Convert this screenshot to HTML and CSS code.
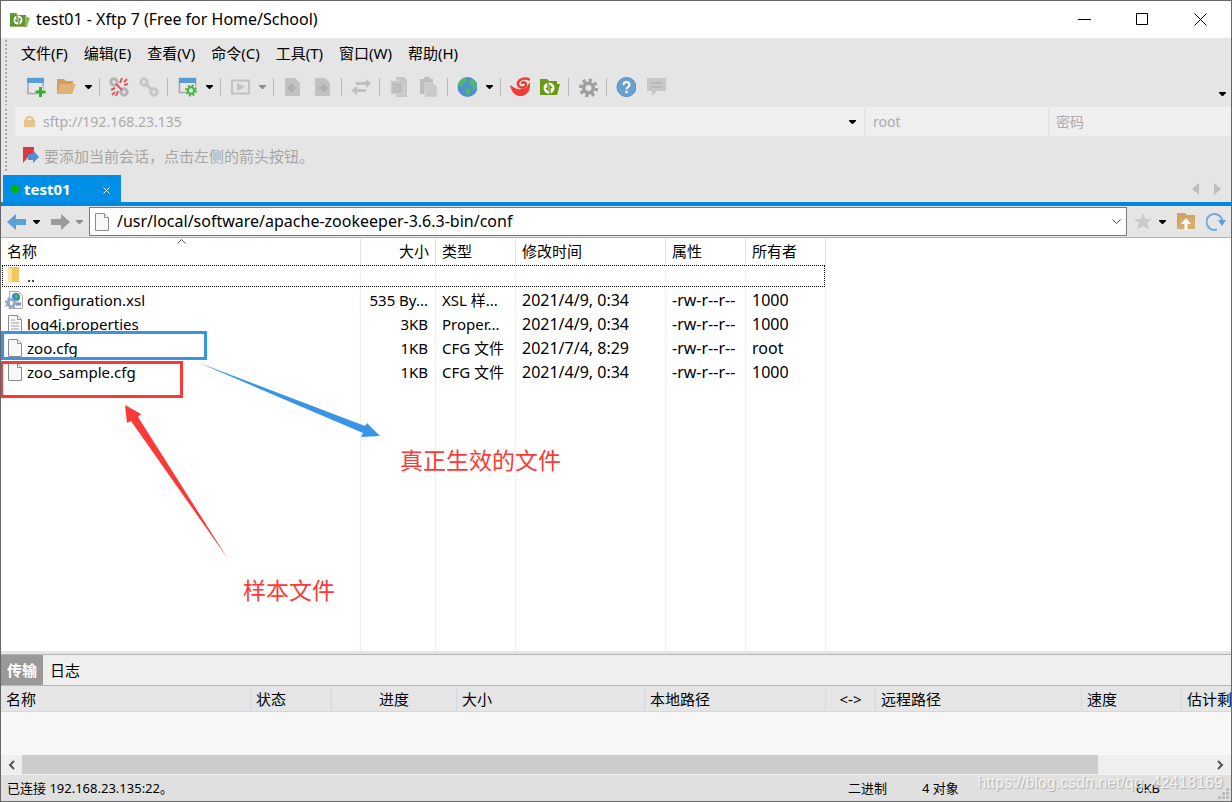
FILE: index.html
```html
<!DOCTYPE html>
<html lang="zh-CN">
<head>
<meta charset="utf-8">
<title>test01 - Xftp 7</title>
<link rel="stylesheet" href="styles.css">
</head>
<body>
<svg class="defs" aria-hidden="true">
  <symbol id="caret" viewBox="0 0 7 4"><path d="M0 0h7v1L4 4H3L0 1z" fill="currentColor"/></symbol>
  <symbol id="page" viewBox="0 0 16 20"><path d="M1.500 1.500h9l4 4v13h-13z" fill="#f8f8f8" stroke="#8c8c8c"/><path d="M10.500 1.500v4h4" fill="#fff" stroke="#8c8c8c"/></symbol>
  <symbol id="sheet" viewBox="0 0 20 20"><path d="M2 1h10l5 5v13H2z" fill="#c2c2c2"/></symbol>
</svg>
<div class="window">
  <header class="titlebar">
    <svg class="app-icon" width="20" height="16" viewBox="0 0 20 16"><path d="M0 1h6l2 2h8v11H0z" fill="#6f9f2e"/><path d="M0 4h15l5 2-3 9H0z" fill="#8eb95e"/><path d="M0 3h15v11H0z" fill="#5f932c"/><circle cx="8" cy="8" r="4.500" fill="#fff"/><path d="M7 3.500v6L5 8M9 12.500v-6L11 8" stroke="#5f932c" stroke-width="1.300" fill="none"/></svg>
    <h1 class="title">test01 - Xftp 7 (Free for Home/School)</h1>
    <div class="window-buttons">
      <button class="win-btn" aria-label="最小化"><svg width="13" height="13"><path d="M0 6.500h13" stroke="#000"/></svg></button>
      <button class="win-btn" aria-label="最大化"><svg width="13" height="13"><path d="M.5.5h11v11H.5z" stroke="#000" fill="none"/></svg></button>
      <button class="win-btn" aria-label="关闭"><svg width="13" height="13"><path d="M.5.5l12 12M12.500.5l-12 12" stroke="#000"/></svg></button>
    </div>
  </header>

  <div class="docked">
    <nav class="menubar">
      <button>文件(F)</button><button>编辑(E)</button><button>查看(V)</button><button>命令(C)</button><button>工具(T)</button><button>窗口(W)</button><button>帮助(H)</button>
    </nav>
    <div class="toolbar">
      <button class="tool" aria-label="新建"><svg viewBox="0 0 20 20"><path d="M2 1.500h15v15H2z" fill="#e8e8e8" stroke="#a4a4a4" stroke-width="1.500"/><path d="M1 1h17v5H1z" fill="#5a9bd4"/><path d="M14.500 9.500v10M9.500 14.500h10" stroke="#e5e5e5" stroke-width="5"/><path d="M14.500 10v10M9.500 15h10" stroke="#2fb02f" stroke-width="3"/></svg></button>
      <button class="tool" aria-label="打开"><svg viewBox="0 0 20 20"><path d="M1 2h7l2 2h7v12H1z" fill="#d49e5c"/><path d="M4 7h16l-4 10H1z" fill="#e0b277"/></svg></button>
      <button class="drop" aria-label="打开列表"><svg><use href="#caret"/></svg></button>
      <span class="sep"></span>
      <button class="tool" aria-label="断开"><svg viewBox="0 0 20 20"><g fill="none" stroke="#b4b4b4" stroke-width="3"><circle cx="5" cy="5" r="3.200"/><circle cx="15" cy="15" r="3.200"/></g><path d="M13 1l-2 5M18 2l-3 3M19 7l-4 1M2 13l4-2M3 18l3-3M7 19l2-5M7 7l6 6" stroke="#e8555c" stroke-width="2"/></svg></button>
      <button class="tool" aria-label="重新连接"><svg viewBox="0 0 20 20"><g fill="none" stroke="#c6c6c6" stroke-width="3"><circle cx="5" cy="5" r="3.200"/><circle cx="15" cy="15" r="3.200"/><path d="M7 7l6 6"/></g></svg></button>
      <span class="sep"></span>
      <button class="tool" aria-label="属性"><svg viewBox="0 0 20 20"><path d="M2.500 1.500h16v14h-16z" fill="#e8e8e8" stroke="#a4a4a4" stroke-width="1.500"/><path d="M2 1h17v5H2z" fill="#5a9bd4"/><circle cx="14" cy="13.500" r="6.500" fill="#e5e5e5"/><circle cx="14" cy="13.500" r="3.200" fill="none" stroke="#43b33c" stroke-width="2"/><circle cx="14" cy="13.500" r="5" fill="none" stroke="#43b33c" stroke-width="2" stroke-dasharray="2 1.930"/></svg></button>
      <button class="drop" aria-label="属性列表"><svg><use href="#caret"/></svg></button>
      <span class="sep"></span>
      <button class="tool" aria-label="运行" disabled><svg viewBox="0 0 20 20"><path d="M2 3.500h17v13H2z" fill="none" stroke="#c2c2c2" stroke-width="2"/><path d="M7 6l8 4-8 4z" fill="#c2c2c2"/></svg></button>
      <button class="drop off" aria-label="运行列表" disabled><svg><use href="#caret"/></svg></button>
      <span class="sep"></span>
      <button class="tool" aria-label="下载" disabled><svg viewBox="0 0 20 20"><use href="#sheet"/><path d="M13 11H8M9 8l-4 3 4 3z" stroke="#b0b0b0" stroke-width="2" fill="#b0b0b0"/></svg></button>
      <button class="tool" aria-label="上传" disabled><svg viewBox="0 0 20 20"><use href="#sheet"/><path d="M5 11h5M10 8l4 3-4 3z" stroke="#b0b0b0" stroke-width="2" fill="#b0b0b0"/></svg></button>
      <span class="sep"></span>
      <button class="tool" aria-label="同步" disabled><svg viewBox="0 0 20 20"><path d="M5 5h10V2l5 4.500-5 4.500V8H5zM15 12H6V9l-6 4.500L6 18v-3h9z" fill="#c0c0c0"/></svg></button>
      <span class="sep"></span>
      <button class="tool" aria-label="复制" disabled><svg viewBox="0 0 20 20"><path d="M7 0h8l3 3v17H7z" fill="#c6c6c6"/><path d="M2 4h10l3 3v10H2z" fill="#c2c2c2" stroke="#d6d6d6"/><path d="M4 8h8M4 11h8M4 14h8" stroke="#b2b2b2"/></svg></button>
      <button class="tool" aria-label="粘贴" disabled><svg viewBox="0 0 20 20"><path d="M1 2h4V0h6v2h3v15H1z" fill="#bebebe"/><path d="M6 6h8l4 4v10H6z" fill="#c9c9c9" stroke="#d8d8d8"/></svg></button>
      <span class="sep"></span>
      <button class="tool" aria-label="语言"><svg viewBox="0 0 20 20"><circle cx="10.500" cy="10" r="10" fill="#4f8fd0"/><path d="M2 5l3-3 4-1 1 2-1 3-3 1-1 3-4-1zM13 2l4 1 3 6-2 4-2-1-1-4-3-1zM9 11l5 1-1 4-3 3-2-4z" fill="#4cba68"/></svg></button>
      <button class="drop" aria-label="语言列表"><svg><use href="#caret"/></svg></button>
      <span class="sep"></span>
      <button class="tool" aria-label="Xshell"><svg viewBox="0 0 20 20"><path d="M0 8c4 2 6 5 11 4l5-1 4-6c1 8-3 14-10 14C4 19 1 13 0 8z" fill="#ef3d33"/><path d="M20 3c-5-3-11-1-12 3-1 5 7 6 8 2 0-3-4-4-4-1" fill="none" stroke="#ef3d33" stroke-width="2.500"/></svg></button>
      <button class="tool" aria-label="Xftp"><svg viewBox="0 0 20 20"><path d="M0 2h7l2 2h8v3h3l-3 11H0z" fill="#6a9a13"/><circle cx="9" cy="11" r="5.500" fill="#fff"/><path d="M8 5v8l-2-2M10 17V9l2 2" stroke="#6a9a13" stroke-width="1.500" fill="none"/></svg></button>
      <span class="sep"></span>
      <button class="tool" aria-label="选项"><svg viewBox="0 0 20 20"><circle cx="10.500" cy="11" r="4.800" fill="none" stroke="#9e9e9e" stroke-width="3.500"/><circle cx="10.500" cy="11" r="7.800" fill="none" stroke="#9e9e9e" stroke-width="3.500" stroke-dasharray="3.060 3.060"/></svg></button>
      <span class="sep"></span>
      <button class="tool" aria-label="帮助"><svg viewBox="0 0 20 20"><circle cx="10.500" cy="10" r="9.500" fill="#6a9fd4" stroke="#5588c4"/><path d="M7.500 8c0-4 6-4 6 0 0 2-3 2-3 4.500" stroke="#fff" stroke-width="2" fill="none"/><circle cx="10.500" cy="15" r="1.300" fill="#fff"/></svg></button>
      <button class="tool" aria-label="反馈"><svg viewBox="0 0 20 20"><path d="M1 1h19v13h-9l-5 5v-5H1z" fill="#c8c8c8"/><path d="M5 6h11M5 10h11" stroke="#b4b4b4" stroke-width="1.500"/></svg></button>
      <button class="drop more" aria-label="更多"><svg><use href="#caret"/></svg></button>
    </div>
  </div>

  <div class="docked">
    <form class="address">
      <label class="host"><svg width="11" height="12"><path d="M2.500 5V3q0-2 3-2t3 2v2" fill="none" stroke="#e8c38c" stroke-width="2"/><path d="M0 4h11v7H0z" fill="#e8c38c"/></svg><input type="text" aria-label="主机" value="sftp://192.168.23.135"><button type="button" class="drop" aria-label="主机列表"><svg><use href="#caret"/></svg></button></label>
      <input class="user" type="text" aria-label="用户名" value="root">
      <input class="pass" type="password" aria-label="密码" placeholder="密码">
    </form>
    <div class="hint">
      <button class="flag" aria-label="添加会话"><svg width="16" height="17"><path d="M0 0h11v11L5 10l-5 6z" fill="#e0383e"/><path d="M5 7h5V3l6 7-6 6v-3H5z" fill="#568fd0"/></svg></button>
      <span>要添加当前会话，点击左侧的箭头按钮。</span>
    </div>
  </div>

  <div class="tabs">
    <div class="tab"><i class="dot"></i><button class="tab-name">test01</button><button class="tab-close" aria-label="关闭标签"><svg width="7" height="7"><path d="M.5.5l6 6M6.500.5l-6 6" stroke="#fff"/></svg></button></div>
    <button class="scroller" aria-label="上一个"><svg width="7" height="12"><path d="M7 0v12L0 6z" fill="#bebebe"/></svg></button>
    <button class="scroller" aria-label="下一个"><svg width="7" height="12"><path d="M0 0v12l7-6z" fill="#bebebe"/></svg></button>
  </div>

  <div class="pathbar">
    <button class="nav" aria-label="后退"><svg width="20" height="16"><path d="M0 8l9-8v5h10v6H9v5z" fill="#5b9fd8"/></svg></button>
    <button class="drop" aria-label="后退列表"><svg><use href="#caret"/></svg></button>
    <button class="nav forward" aria-label="前进"><svg width="20" height="16"><path d="M20 8l-9-8v5H1v6h10v5z" fill="#9b9b9b"/></svg></button>
    <button class="drop off" aria-label="前进列表"><svg><use href="#caret"/></svg></button>
    <label class="path"><svg width="16" height="20"><use href="#page"/></svg><input type="text" aria-label="路径" value="/usr/local/software/apache-zookeeper-3.6.3-bin/conf"><button class="chev" type="button" aria-label="路径列表"><svg width="9" height="6"><path d="M.5.5l4 4 4-4" fill="none" stroke="#444"/></svg></button></label>
    <button class="nav" aria-label="收藏"><svg width="18" height="17" viewBox="0 0 18 17"><path d="M9 0l2.500 6H18l-5 4 2 6.500L9 13l-6 3.500L5 10 0 6h6.500z" fill="#cacaca"/></svg></button>
    <button class="drop" aria-label="收藏列表"><svg><use href="#caret"/></svg></button>
    <button class="nav up" aria-label="上级目录"><svg width="18" height="17"><path d="M0 0h8l2 2h8v14H0z" fill="#d6a161"/><path d="M3 5h15v11H0z" fill="#d9ab70"/><path d="M9 17v-7" stroke="#fff" stroke-width="3"/><path d="M9 5l5 6H4z" fill="#fff"/></svg></button>
    <button class="nav" aria-label="刷新"><svg width="20" height="18"><path d="M11 16.500A8 8 0 1 1 16.500 9" fill="none" stroke="#72aade" stroke-width="2"/><path d="M12 7h8l-4 6z" fill="#5b9fd8"/></svg></button>
  </div>

  <main class="files">
    <table class="file-table">
      <colgroup><col class="c-name"><col class="c-size"><col class="c-type"><col class="c-date"><col class="c-attr"><col class="c-owner"></colgroup>
      <thead><tr><th class="sorted">名称<svg width="9" height="5"><path d="M.5 4.500l4-4 4 4" fill="none" stroke="#555"/></svg></th><th class="num">大小</th><th>类型</th><th>修改时间</th><th>属性</th><th>所有者</th></tr></thead>
      <tbody>
        <tr class="focus"><td><span class="file"><svg width="18" height="20"><path d="M1 1h11v15H1z" fill="#f2c75b"/><path d="M1 1l4 2v15l-4-2z" fill="#fde39a"/></svg>..</span></td><td></td><td></td><td></td><td></td><td></td></tr>
        <tr><td><span class="file"><svg viewBox="2 0 16 20"><path d="M4.500 1.500h9l4 4v13h-13z" fill="#f4f6f8" stroke="#a8adb3"/><circle cx="11" cy="7" r="4" fill="#3677c4"/><path d="M9 5l3-1 2 2-3 4z" fill="#43bd64"/><circle cx="6" cy="13" r="3.500" fill="none" stroke="#92a7bb" stroke-width="2.500"/><circle cx="6" cy="13" r="5.200" fill="none" stroke="#92a7bb" stroke-width="2" stroke-dasharray="2 2.080"/><path d="M11 14h5" stroke="#8090c8" stroke-width="3"/></svg>configuration.xsl</span></td><td class="num">535 By...</td><td>XSL 样...</td><td class="data">2021/4/9, 0:34</td><td class="data">-rw-r--r--</td><td class="data">1000</td></tr>
        <tr><td><span class="file"><svg width="16" height="20"><use href="#page"/><path d="M4 6h4M4 9h8M4 12h8M4 15h8" stroke="#a0a0a0"/></svg>log4j.properties</span></td><td class="num">3KB</td><td>Proper...</td><td class="data">2021/4/9, 0:34</td><td class="data">-rw-r--r--</td><td class="data">1000</td></tr>
        <tr><td><span class="file"><svg width="16" height="20"><use href="#page"/></svg>zoo.cfg</span></td><td class="num">1KB</td><td>CFG 文件</td><td class="data">2021/7/4, 8:29</td><td class="data">-rw-r--r--</td><td class="data">root</td></tr>
        <tr><td><span class="file"><svg width="16" height="20"><use href="#page"/></svg>zoo_sample.cfg</span></td><td class="num">1KB</td><td>CFG 文件</td><td class="data">2021/4/9, 0:34</td><td class="data">-rw-r--r--</td><td class="data">1000</td></tr>
        <tr class="filler" aria-hidden="true"><td></td><td></td><td></td><td></td><td></td><td></td></tr>
      </tbody>
    </table>
    <div class="mark mark-blue"></div>
    <div class="mark mark-red"></div>
    <svg class="arrows" width="400" height="340"><path d="M197 124L365 188l2-3 13 13-19 1 2-4z" fill="#3a94e6"/><path d="M125 167l16 9-3 3 90 142-97-138-4 2z" fill="#fb3a38"/></svg>
    <p class="note note-live">真正生效的文件</p>
    <p class="note note-sample">样本文件</p>
  </main>

  <section class="transfer">
    <div class="pane-tabs"><button class="active">传输</button><button>日志</button></div>
    <div class="queue">
      <table class="queue-table">
        <colgroup><col class="q-name"><col class="q-state"><col class="q-prog"><col class="q-size"><col class="q-local"><col class="q-dir"><col class="q-remote"><col class="q-speed"><col class="q-left"></colgroup>
        <thead><tr><th>名称</th><th>状态</th><th class="mid">进度</th><th>大小</th><th>本地路径</th><th class="mid">&lt;-&gt;</th><th>远程路径</th><th>速度</th><th>估计剩</th></tr></thead>
      </table>
    </div>
    <div class="scrollbar">
      <button aria-label="向左"><svg width="7" height="10"><path d="M6 1L2 5l4 4" fill="none" stroke="#555" stroke-width="2"/></svg></button>
      <div class="track"><div class="thumb"></div></div>
      <button aria-label="向右"><svg width="7" height="10"><path d="M1 1l4 4-4 4" fill="none" stroke="#555" stroke-width="2"/></svg></button>
    </div>
  </section>

  <footer class="status">
    <span class="conn">已连接 192.168.23.135:22。</span><span class="mode">二进制</span><span class="count">4 对象</span><span class="bytes">6KB</span>
    <svg class="grip" width="11" height="11"><path d="M8 0h3v3H8zM4 4h3v3H4zM8 4h3v3H8zM0 8h3v3H0zM4 8h3v3H4zM8 8h3v3H8z" fill="#bcbcbc"/></svg>
    <span class="watermark">https://blog.csdn.net/qq_42418169</span>
  </footer>
</div>
</body>
</html>
```
FILE: styles.css
```css
* { box-sizing: border-box; }
body { margin: 0; font: 15px/20px "Noto Sans", "Noto Sans CJK SC", sans-serif; color: #000; }
button, input { font: inherit; color: inherit; background: none; border: 0; padding: 0; margin: 0; white-space: nowrap; }
input { outline: 0; min-width: 0; }
svg { display: block; flex: none; }
.defs { position: absolute; width: 0; height: 0; }
.window { display: flex; flex-direction: column; height: 100vh; background: #e5e5e5; border: 1px solid #666; overflow: hidden; }

.titlebar { display: flex; align-items: center; height: 37px; flex: none; background: #fff; padding: 0 2px 0 9px; }
.title { flex: 1; margin: 0 0 0 6px; padding-bottom: 2px; font-size: 16px; font-weight: 400; }
.window-buttons { display: flex; }
.win-btn { display: grid; place-items: center; width: 58px; height: 36px; }

.docked { position: relative; flex: none; padding-left: 14px; }
.docked::before { content: ""; position: absolute; left: 4px; top: 2px; bottom: 2px; width: 2px; background: repeating-linear-gradient(#a8a8a8 0 2px, #f4f4f4 2px 3px, transparent 3px 4px); }
.menubar { display: flex; gap: 16px; height: 32px; align-items: center; padding: 0 0 2px 6px; }
.toolbar { display: flex; align-items: center; height: 37px; padding: 0 1px 3px 6px; }
.tool { display: grid; place-items: center; width: 30px; height: 30px; flex: none; }
.tool svg { width: 20px; height: 20px; }
.drop { display: grid; place-items: center; width: 15px; height: 24px; flex: none; }
.drop svg { width: 7px; height: 4px; }
.off { color: #8c8c8c; }
.more { margin-left: auto; align-self: flex-end; height: 20px; }
.sep { width: 8px; height: 18px; flex: none; background: linear-gradient(90deg, transparent 3px, #b8b8b8 3px 4px, transparent 4px); }

.address { display: flex; gap: 2px; height: 29px; color: #ababab; font-size: 14px; }
.address > * { background: #efefef; }
.host { flex: 1; display: flex; align-items: center; padding: 0 4px 0 9px; min-width: 0; }
.host input { flex: 1; margin-left: 8px; }
.host .drop { color: #000; }
.user { width: 182px; padding-left: 7px; }
.pass { width: 181px; padding-left: 6px; }
.pass::placeholder { color: #ababab; opacity: 1; }
.hint { display: flex; align-items: center; gap: 5px; height: 39px; padding-left: 8px; color: #a6a6a6; }

.tabs { display: flex; align-items: center; flex: none; height: 31px; border-bottom: 4px solid #0088e0; padding: 0 10px 0 2px; gap: 15px; }
.tab { display: flex; align-items: center; width: 118px; height: 27px; background: #008ee6; color: #fff; font-weight: 700; margin-right: auto; padding: 0 11px 0 8px; }
.dot { width: 8px; height: 8px; border-radius: 50%; background: #00b500; margin-right: 5px; }
.tab-close { margin-left: auto; padding-top: 3px; }

.pathbar { display: flex; align-items: center; flex: none; height: 32px; border-bottom: 1px solid #b2b2b2; padding: 0 3px 0 5px; }
.nav { display: grid; place-items: center; width: 22px; height: 28px; margin-right: 1px; }
.nav + .drop { margin-right: 5px; }
.forward + .drop { margin-right: 2px; }
.path { flex: 1; display: flex; align-items: center; height: 29px; background: #fff; border: 1px solid #7a7a7a; padding: 0 5px 0 4px; min-width: 0; margin-right: 5px; }
.path input { flex: 1; margin-left: 7px; padding-bottom: 2px; font-size: 16px; }
.up { margin-right: 8px; }

.files { position: relative; flex: 1; min-height: 0; display: grid; background: #fff; }
.file-table { table-layout: fixed; border-collapse: separate; border-spacing: 0; width: 825px; height: 100%; }
.c-name { width: 360px; }
.c-size { width: 75px; }
.c-type, .c-attr, .c-owner { width: 80px; }
.c-date { width: 150px; }
.file-table th, .file-table td { height: 24px; padding: 0 6px; border-right: 1px solid #e8f1fa; font-weight: 400; text-align: left; white-space: nowrap; overflow: hidden; }
.file-table th { height: 26px; border-color: #e4e4e4; }
.file-table td { padding-right: 5px; }
.file-table .filler td { height: auto; }
.file-table .num { text-align: right; }
.file-table td.num { padding-right: 7px; }
.file-table .data { font-size: 16px; }
.file-table .focus { outline: 1px dotted #000; outline-offset: -2px; }
.sorted { position: relative; }
.sorted svg { position: absolute; left: 50%; top: 1px; margin-left: -4px; }
.file { display: flex; align-items: center; gap: 4px; }
.file svg { width: 16px; height: 20px; overflow: visible; }
.mark { position: absolute; border: 3px solid; }
.mark-blue { left: 0; top: 93px; width: 206px; height: 29px; color: #3a94e6; }
.mark-red { left: -1px; top: 123px; width: 183px; height: 37px; color: #fb3a38; }
.arrows { position: absolute; left: -1px; top: 0; }
.note { position: absolute; margin: 0; font-size: 23px; line-height: 28px; color: #fb3a38; white-space: nowrap; }
.note-live { left: 399px; top: 208px; }
.note-sample { left: 242px; top: 338px; }

.transfer { flex: none; border-top: 3px solid #e5e5e5; }
.pane-tabs { display: flex; height: 32px; background: #efefef; border: solid #b5b5b5; border-width: 1px 0; }
.pane-tabs button { padding: 0 7px; }
.pane-tabs .active { padding: 0 6px; background: #999; color: #fff; font-weight: 700; }
.queue { height: 69px; background: #f7f7f7; overflow: hidden; }
.queue-table { table-layout: fixed; border-collapse: separate; border-spacing: 0; width: 1330px; background: #e5e5e5; }
.q-name { width: 250px; }
.q-state { width: 81px; }
.q-prog { width: 125px; }
.q-size { width: 188px; }
.q-local { width: 181px; }
.q-dir { width: 50px; }
.q-remote { width: 206px; }
.q-speed { width: 100px; }
.q-left { width: 149px; }
.queue-table th { height: 26px; padding: 0 5px; font-weight: 400; text-align: left; border: solid #d0dae6; border-width: 0 1px 1px 0; white-space: nowrap; }
.queue-table .mid { text-align: center; }
.scrollbar { display: flex; height: 20px; background: #efefef; border-bottom: 1px solid #f3f3f3; }
.scrollbar button { display: grid; place-items: center; width: 21px; }
.track { flex: 1; }
.thumb { width: 90.6%; height: 100%; background: #cccccc; }

.status { position: relative; flex: none; display: flex; align-items: center; height: 26px; background: #e0e0e0; padding: 0 2px 0 6px; font-size: 13px; }
.conn { flex: 1; }
.mode { width: 74px; }
.count { width: 214px; }
.bytes { width: 82px; }
.grip { align-self: flex-end; margin-bottom: 2px; }
.watermark { position: absolute; right: 8px; top: -2px; font: 16px/20px "Liberation Sans", sans-serif; color: rgba(255, 255, 255, 0.75); text-shadow: 1px 1px 1px rgba(120, 120, 120, 0.5); }
```
